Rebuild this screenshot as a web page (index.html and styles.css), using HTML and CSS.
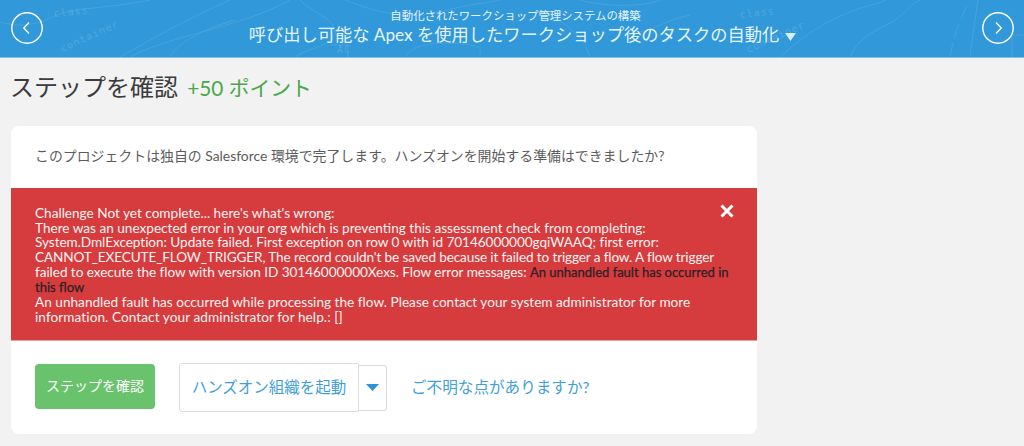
FILE: index.html
```html
<!DOCTYPE html>
<html lang="ja">
<head>
<meta charset="utf-8">
<title>ステップを確認</title>
<link rel="stylesheet" href="styles.css">
</head>
<body>
<header class="hero">
  <svg class="contours" width="1024" height="57" viewBox="0 0 1024 57" fill="none">
    <g stroke="#5aaee0" stroke-width="1" opacity=".55">
      <path d="M0 22 C30 30 45 20 60 14 S110 8 150 0"/>
      <path d="M120 57 C150 40 185 20 230 0"/>
      <path d="M130 57 C170 35 240 28 290 0"/>
      <path d="M235 20 C200 30 175 45 170 57"/>
      <path d="M300 0 C310 12 330 15 335 30 S300 50 296 57"/>
      <path d="M330 45 h18 v12"/>
      <path d="M405 57 C415 42 440 42 462 44 S480 50 480 57"/>
      <path d="M345 0 C380 14 410 20 440 12 S480 4 500 0"/>
      <path d="M540 10 C570 24 585 40 590 57"/>
      <path d="M580 0 C600 6 640 8 660 0"/>
      <path d="M690 15 C660 22 660 28 640 32"/>
      <path d="M780 57 C810 30 830 20 850 12 S880 4 885 0"/>
      <path d="M850 57 C860 34 880 30 895 20 S905 8 920 0"/>
      <path d="M950 57 C955 30 960 20 970 0" stroke-dasharray="14 6"/>
      <path d="M970 57 C972 40 975 20 978 0"/>
      <path d="M1012 57 v-22 h12"/>
    </g>
    <g class="contour-text">
      <text x="54" y="17" transform="rotate(-6 54 17)">class</text>
      <text x="62" y="52" transform="rotate(-24 62 52)">container</text>
      <text x="740" y="18" transform="rotate(-6 740 18)">class</text>
      <text x="748" y="53" transform="rotate(-24 748 53)">container</text>
      <text x="337" y="53">AC</text>
    </g>
  </svg>
  <a class="nav-circle" href="#" aria-label="前へ">
    <svg width="32" height="32" viewBox="0 0 32 32" fill="none"><circle cx="16" cy="16" r="15.2" stroke="#fff" stroke-width="1.4"/><path d="M18 10.5 L12.8 16 L18 21.5" stroke="#fff" stroke-width="1.4"/></svg>
  </a>
  <div class="hero-titles">
    <div class="hero-sub">自動化されたワークショップ管理システムの構築</div>
    <div class="hero-main">呼び出し可能な Apex を使用したワークショップ後のタスクの自動化<svg class="hero-caret" width="11" height="8" viewBox="0 0 11 8"><path d="M0 0 H11 L5.5 8 Z" fill="#d8f0fc"/></svg></div>
  </div>
  <a class="nav-circle" href="#" aria-label="次へ">
    <svg width="32" height="32" viewBox="0 0 32 32" fill="none"><circle cx="16" cy="16" r="15.2" stroke="#fff" stroke-width="1.4"/><path d="M14 10.5 L19.2 16 L14 21.5" stroke="#fff" stroke-width="1.4"/></svg>
  </a>
</header>

<main class="page">
  <h1 class="step-title">ステップを確認 <span class="points">+50 ポイント</span></h1>
  <section class="card">
    <p class="intro">このプロジェクトは独自の Salesforce 環境で完了します。ハンズオンを開始する準備はできましたか?</p>
    <div class="alert">
      <svg class="alert-close" width="14" height="14" viewBox="0 0 14 14"><path d="M1.5 1.5 L12.5 12.5 M12.5 1.5 L1.5 12.5" stroke="#fff" stroke-width="3"/></svg>
      <div class="alert-text">Challenge Not yet complete... here's what's wrong:<br>There was an unexpected error in your org which is preventing this assessment check from completing:<br><span class="snug">System.DmlException: Update failed. First exception on row 0 with id 70146000000gqiWAAQ; first error:</span><br><span class="tight">CANNOT_EXECUTE_FLOW_TRIGGER, The record couldn't be saved because it failed to trigger a flow. A flow trigger</span><br><span class="snug">failed to execute the flow with version ID 30146000000Xexs. Flow error messages:</span> <span class="alert-dark">An unhandled fault has occurred in<br>this flow</span><br><span class="after-dark">An unhandled fault has occurred while processing the flow. Please contact your system administrator for more<br><span class="roomy">information. Contact your administrator for help.: []</span></span></div>
    </div>
    <div class="actions">
      <button class="btn-check">ステップを確認</button>
      <div class="launch">
        <button class="btn-launch">ハンズオン組織を起動</button>
        <button class="btn-drop" aria-label="メニュー"><svg width="13" height="7" viewBox="0 0 13 7"><path d="M0 0 H13 L6.5 7 Z" fill="#2a94d6"/></svg></button>
      </div>
      <a class="help" href="#">ご不明な点がありますか?</a>
    </div>
  </section>
</main>
</body>
</html>
```
FILE: styles.css
```css
* { box-sizing: border-box; }
html, body { margin: 0; padding: 0; }
body {
  background: #f2f2f2;
  font-family: "Lato", "Noto Sans CJK JP", sans-serif;
  color: #444;
  height: 446px;
  overflow: hidden;
}
.hero {
  position: relative;
  height: 58px;
  background: #3198d9;
  border-bottom: 1px solid #7cc3ec;
  display: flex;
  align-items: center;
  justify-content: space-between;
  padding: 0 10px 1px 11px;
  color: #e6f5fd;
  overflow: hidden;
}
.contours { position: absolute; left: 0; top: 0; }
.contour-text text {
  font-family: "DejaVu Sans Mono", monospace;
  font-size: 10px;
  letter-spacing: 1px;
  fill: #5aaee0;
  opacity: .75;
}
.nav-circle { position: relative; display: block; width: 32px; height: 32px; }
.nav-circle svg { display: block; }
.hero-titles { position: relative; text-align: center; margin-top: -4px; margin-left: 6px; }
.hero-sub { font-size: 11.4px; line-height: 15px; }
.hero-main { font-size: 17.25px; line-height: 21px; margin-top: 1px; padding-left: 14px; }
.hero-caret { margin-left: 6px; }
.page { padding: 0 11px; }
.step-title {
  margin: 0 0 0 -1px;
  padding-top: 13px;
  height: 68px;
  font-size: 24px;
  line-height: 32px;
  font-weight: 400;
  color: #3c3c3c;
}
.points { font-size: 20.8px; color: #4ba64a; margin-left: 3px; }
.card {
  width: 746px;
  height: 308px;
  background: #fff;
  border-radius: 8px;
  overflow: hidden;
}
.intro {
  margin: 0;
  height: 62px;
  padding: 20px 24px 0;
  font-size: 13.9px;
  line-height: 20px;
  color: #5c5c5c;
}
.alert {
  position: relative;
  height: 153px;
  background: #d63b3d;
  border-bottom: 1px solid #e99d9d;
  padding: 18px 24px 0;
  color: #fdf3f2;
}
.alert-text { font-size: 13.6px; line-height: 14.7px; white-space: nowrap; }
.alert-dark { color: #2b2226; font-size: 13px; -webkit-text-stroke: .25px #2b2226; }
.snug { letter-spacing: -.05px; }
.tight { letter-spacing: -.135px; }
.after-dark { letter-spacing: .02px; position: relative; top: 1px; }
.roomy { letter-spacing: .08px; }
.alert-close { position: absolute; right: 23px; top: 16px; }
.actions {
  display: flex;
  align-items: center;
  height: 93px;
  padding: 0 24px;
  margin-top: -1px;
}
.btn-check {
  width: 120px;
  height: 45px;
  background: #69c26c;
  border: 0;
  border-radius: 4px;
  color: #fff;
  font: inherit;
  font-size: 14px;
  padding: 0 0 3px;
}
.launch { display: flex; align-items: center; margin: 2px 0 0 24px; }
.btn-launch {
  width: 180px;
  height: 49px;
  background: #fff;
  border: 1px solid #dcdcdc;
  border-radius: 3px 0 0 3px;
  color: #3f9fd9;
  font: inherit;
  font-size: 15.5px;
  padding: 0 0 4px;
}
.btn-drop {
  width: 28px;
  height: 46px;
  background: #fff;
  border: 1px solid #dcdcdc;
  border-left: 0;
  border-radius: 0 3px 3px 0;
  padding: 0;
  display: flex;
  align-items: center;
  justify-content: center;
}
.help {
  margin-left: 24px;
  color: #3f9fd9;
  font-size: 15.6px;
  text-decoration: none;
  padding-bottom: 2px;
}
```
